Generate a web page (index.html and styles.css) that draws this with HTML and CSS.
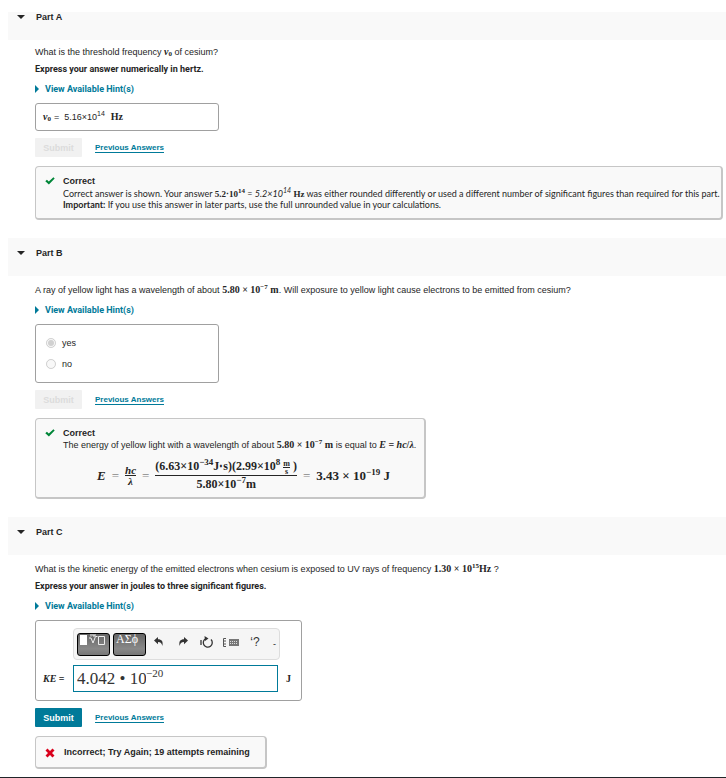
FILE: index.html
```html
<!DOCTYPE html>
<html lang="en">
<head>
  <meta charset="UTF-8">
  <meta name="viewport" content="width=device-width, initial-scale=1.0">
  <title>Photoelectric Effect in Cesium</title>
  <link rel="stylesheet" href="styles.css">
</head>
<body>
<main class="page">

  <section class="part part-first">
    <h2 class="part-header"><span class="caret"></span>Part A</h2>
    <div class="part-body">
      <p>What is the threshold frequency <span class="math"><i>ν</i><sub>0</sub></span> of cesium?</p>
      <p class="strong">Express your answer numerically in hertz.</p>
      <a class="hints" href="#"><span class="hint-arrow"></span>View Available Hint(s)</a>
      <div class="answer-box answer-value">
        <span class="math"><i>ν</i><sub>0</sub></span> <span>=</span>
        <span class="value">5.16×10<sup>14</sup></span>
        <span class="math">Hz</span>
      </div>
      <div class="actions">
        <button class="submit" disabled>Submit</button>
        <a class="previous" href="#">Previous Answers</a>
      </div>
      <div class="feedback feedback-wide">
        <svg class="mark" viewBox="0 0 10 8"><path d="M0.3 4.2 1.9 2.8 3.8 4.6 8.4 0.3 9.7 1.6 3.9 7.6Z" fill="#008638"/></svg>
        <div>
          <h3>Correct</h3>
          <p>Correct answer is shown. Your answer <span class="math">5.2⋅10<sup>14</sup></span> = <i>5.2×10<sup>14</sup></i> <span class="math">Hz</span> was either rounded differently or used a different number of significant figures than required for this part.</p>
          <p><b>Important:</b> If you use this answer in later parts, use the full unrounded value in your calculations.</p>
        </div>
      </div>
    </div>
  </section>

  <section class="part">
    <h2 class="part-header"><span class="caret"></span>Part B</h2>
    <div class="part-body">
      <p>A ray of yellow light has a wavelength of about <span class="math">5.80 × 10<sup>−7</sup> m</span>. Will exposure to yellow light cause electrons to be emitted from cesium?</p>
      <a class="hints" href="#"><span class="hint-arrow"></span>View Available Hint(s)</a>
      <div class="answer-box answer-choices">
        <label><input type="radio" name="emitted" checked disabled>yes</label>
        <label><input type="radio" name="emitted" disabled>no</label>
      </div>
      <div class="actions">
        <button class="submit" disabled>Submit</button>
        <a class="previous" href="#">Previous Answers</a>
      </div>
      <div class="feedback">
        <svg class="mark" viewBox="0 0 10 8"><path d="M0.3 4.2 1.9 2.8 3.8 4.6 8.4 0.3 9.7 1.6 3.9 7.6Z" fill="#008638"/></svg>
        <div>
          <h3>Correct</h3>
          <p>The energy of yellow light with a wavelength of about <span class="math">5.80 × 10<sup>−7</sup> m</span> is equal to <span class="math"><i>E</i> = <i>hc</i>/<i>λ</i></span>.</p>
          <div class="equation math">
            <i>E</i>
            <span class="eq">=</span>
            <span class="frac frac-small"><i>hc</i><i class="den">λ</i></span>
            <span class="eq">=</span>
            <span class="frac">
              <span class="num">(6.63×10<sup>−34</sup>J⋅s)(2.99×10<sup>8</sup> <span class="frac frac-unit"><span>m</span><span class="den">s</span></span> )</span>
              <span class="den">5.80×10<sup>−7</sup>m</span>
            </span>
            <span class="eq">=</span>
            <span>3.43 × 10<sup>−19</sup> J</span>
          </div>
        </div>
      </div>
    </div>
  </section>

  <section class="part">
    <h2 class="part-header"><span class="caret"></span>Part C</h2>
    <div class="part-body">
      <p>What is the kinetic energy of the emitted electrons when cesium is exposed to UV rays of frequency <span class="math">1.30 × 10<sup>15</sup>Hz</span> ?</p>
      <p class="strong">Express your answer in joules to three significant figures.</p>
      <a class="hints" href="#"><span class="hint-arrow"></span>View Available Hint(s)</a>
      <div class="answer-box answer-entry">
        <div class="toolbar">
          <button class="palette" aria-label="Templates">
            <svg width="27" height="12" viewBox="0 0 27 12"><path d="M0 1h7v10H0z" fill="#fff"/><path d="M9 4h2l2 5 2.500-6.500h2M11 0v2.500M13 0v2h2V0M18.500 2.500h6v8h-6z" fill="none" stroke="#eee"/></svg>
          </button>
          <button class="palette" aria-label="Symbols">ΑΣϕ</button>
          <button class="tool" aria-label="Undo">
            <svg width="10" height="10" viewBox="0 0 10 10"><path d="M0 3.500 4 0v2.200c3.500 0 5.500 2 4.300 6.800C7.800 6.300 6.800 5 4 5v2.200z" fill="#333"/></svg>
          </button>
          <button class="tool" aria-label="Redo">
            <svg width="10" height="10" viewBox="0 0 10 10"><path d="M10 3.500 6 0v2.200C2.500 2.200.5 4.200 1.700 9 2.200 6.300 3.200 5 6 5v2.200z" fill="#333"/></svg>
          </button>
          <button class="tool" aria-label="Reset">
            <svg width="14" height="13" viewBox="0 0 14 13"><path d="M6 2.500A4.500 4.500 0 1 0 11 3.500M1 4v5" fill="none" stroke="#333" stroke-width="1.300"/><path d="M4.500 0 8.500 2.500 5 5z" fill="#333"/></svg>
          </button>
          <button class="tool" aria-label="Keyboard shortcuts">
            <svg width="18" height="9" viewBox="0 0 18 9"><path d="M4 .5H1.500v8H4M1.500 3H4M1.500 6H4" fill="none" stroke="#555"/><path d="M7 1h10v7H7z" fill="#777"/><path d="M8 3.500h8M8 5.500h8" stroke="#ddd" stroke-dasharray="1 1"/></svg>
          </button>
          <button class="tool help" aria-label="Help">‘?</button>
          <span class="more">-</span>
        </div>
        <label class="math" for="ke"><i>KE</i> =</label>
        <div class="entry">
          <input class="base" id="ke" type="text" value="4.042 • 10">
          <input class="exponent" type="text" aria-label="Exponent" value="−20">
        </div>
        <span class="math unit">J</span>
      </div>
      <div class="actions">
        <button class="submit">Submit</button>
        <a class="previous" href="#">Previous Answers</a>
      </div>
      <div class="feedback feedback-wrong">
        <svg class="mark" viewBox="0 0 10 10"><path d="M2.500 0.500 5 3 7.500 0.500 9.500 2.500 7 5 9.500 7.500 7.500 9.500 5 7 2.500 9.500 0.500 7.500 3 5 0.500 2.500Z" fill="#d9001b"/></svg>
        <h3>Incorrect; Try Again; 19 attempts remaining</h3>
      </div>
    </div>
  </section>

</main>
</body>
</html>
```

FILE: styles.css
```css
* {
  box-sizing: border-box;
}
body {
  margin: 0;
  background-color: #fff;
  color: #252525;
  font-family: "Liberation Sans", Arial, sans-serif;
  font-size: 9px;
  line-height: 16px;
}
h2, h3, p {
  margin: 0;
  font-size: 9px;
}
sup, sub {
  font-size: 7px;
  line-height: 0;
}
sup {
  vertical-align: 4px;
}
sub {
  vertical-align: -1px;
}
.page {
  padding: 12px 0 8px 8px;
  border-bottom: 2px solid #212529;
}

/* part header */
.part-header {
  display: flex;
  align-items: center;
  gap: 11px;
  padding: 10px 9px 18px;
  background-color: #f9f9f9;
  line-height: 10px;
}
.part-first .part-header {
  padding-top: 0;
}
.caret {
  border: 4px solid transparent;
  border-top-color: #252525;
  border-bottom: 0;
}
.part-body {
  padding: 6px 0 18px 27px;
}
.part-first .part-body {
  padding-top: 4px;
}
.part:last-child .part-body {
  padding-bottom: 0;
}
.strong {
  margin-top: 1px;
  font-family: Roboto, sans-serif;
  font-weight: bold;
}
.math {
  font-family: "Liberation Serif", "Times New Roman", serif;
  font-size: 10px;
  font-weight: bold;
  line-height: 10px;
}
.hints {
  display: flex;
  align-items: center;
  gap: 6px;
  width: fit-content;
  margin: 4px 0 6px;
  color: #007a99;
  font-family: Roboto, sans-serif;
  font-weight: bold;
  text-decoration: none;
}
.hint-arrow {
  border: 4px solid transparent;
  border-left-color: #007a99;
  border-right: 0;
}

/* answers */
.answer-box {
  width: fit-content;
  min-width: 184px;
  border: 1px solid #a0a0a0;
  border-radius: 3px;
}
.answer-value {
  display: flex;
  align-items: center;
  gap: 3px;
  height: 28px;
  padding: 0 7px;
}
.value {
  margin: 0 3px 0 2px;
}
.answer-choices {
  display: grid;
  gap: 5px;
  padding: 10px;
}
.answer-choices label {
  display: flex;
  align-items: center;
  gap: 6px;
}
.answer-choices input {
  width: 10px;
  height: 10px;
  margin: 0;
}
.answer-entry {
  display: grid;
  grid-template-columns: 26px 205px auto;
  align-items: center;
  column-gap: 4px;
  row-gap: 5px;
  padding: 7px 10px 8px 7px;
}
.toolbar {
  grid-column: 2 / 4;
  display: flex;
  align-items: center;
  width: 207px;
  height: 32px;
  padding: 0 3px;
  border: 1px solid #ddd;
  border-radius: 4px;
  background-color: #f5f5f5;
}
.palette {
  display: flex;
  flex: none;
  width: 33px;
  height: 23px;
  margin-right: 3px;
  padding: 0 2px;
  border: 1px solid #000;
  border-radius: 3px;
  background: linear-gradient(#666, #888 70%, #777);
  color: #fff;
  font-family: "Liberation Serif", serif;
  font-size: 12px;
  line-height: 11px;
}
.tool {
  display: flex;
  align-items: center;
  justify-content: center;
  width: 24px;
  padding: 0 4px 4px 0;
  border: 0;
  background: none;
  color: #333;
}
.help {
  font-size: 12px;
}
.more {
  margin-left: auto;
}
.entry {
  display: flex;
  align-items: flex-start;
  height: 27px;
  padding: 0 3px;
  border: 1px solid #007a99;
}
.entry input {
  padding: 0;
  border: 0;
  outline: 0;
  background: none;
  color: #333;
  font-family: "Liberation Serif", "Times New Roman", serif;
}
.base {
  width: 69px;
  height: 25px;
  font-size: 17px;
}
.exponent {
  flex: 1;
  min-width: 0;
  height: 14px;
  font-size: 11px;
}
.unit {
  padding-left: 4px;
}

/* submit row */
.actions {
  display: flex;
  align-items: center;
  gap: 13px;
  margin: 7px 0 9px;
}
.submit {
  width: 47px;
  height: 19px;
  padding: 0;
  border: 0;
  border-radius: 1px;
  background-color: #007a99;
  color: #fff;
  font-family: inherit;
  font-size: 9px;
  font-weight: bold;
}
.submit:disabled {
  background-color: #f1f1f1;
  color: #dcdcdc;
}
.previous {
  border-bottom: 1px solid #007a99;
  color: #007a99;
  font-size: 8px;
  font-weight: bold;
  line-height: 9px;
  text-decoration: none;
}

/* feedback */
.feedback {
  display: flex;
  gap: 8px;
  width: fit-content;
  padding: 8px 8px 8px 9px;
  border: 1px solid #c6c6c6;
  border-width: 1px 2px 2px 1px;
  border-radius: 4px;
  background-color: #f9f9f9;
  line-height: 11px;
}
.feedback h3 {
  margin-bottom: 1px;
  line-height: 12px;
}
.feedback-wide {
  padding-right: 1px;
}
.feedback-wide p {
  font-family: Lato, "Liberation Sans", sans-serif;
}
.feedback-wide .math {
  font-size: 9px;
}
.mark {
  flex: none;
  width: 10px;
  height: 10px;
  margin-top: 1px;
}
.feedback-wrong {
  align-items: center;
  gap: 9px;
  padding-right: 15px;
}
.feedback-wrong h3 {
  margin: 1px 0;
}

/* displayed equation */
.equation {
  display: flex;
  align-items: center;
  gap: 6px;
  margin-bottom: -4px;
  padding: 7px 0 0 34px;
  font-size: 13px;
}
.equation sup {
  font-size: 9px;
  vertical-align: 5px;
}
.eq {
  color: #888;
  font-weight: normal;
}
.frac {
  display: inline-flex;
  flex-direction: column;
  text-align: center;
  font-size: 12px;
  line-height: 17px;
}
.den {
  border-top: 1px solid #252525;
}
.frac-small {
  font-size: 11px;
  line-height: 10px;
}
.frac-unit {
  font-size: 8px;
  line-height: 7px;
  vertical-align: middle;
}
```
